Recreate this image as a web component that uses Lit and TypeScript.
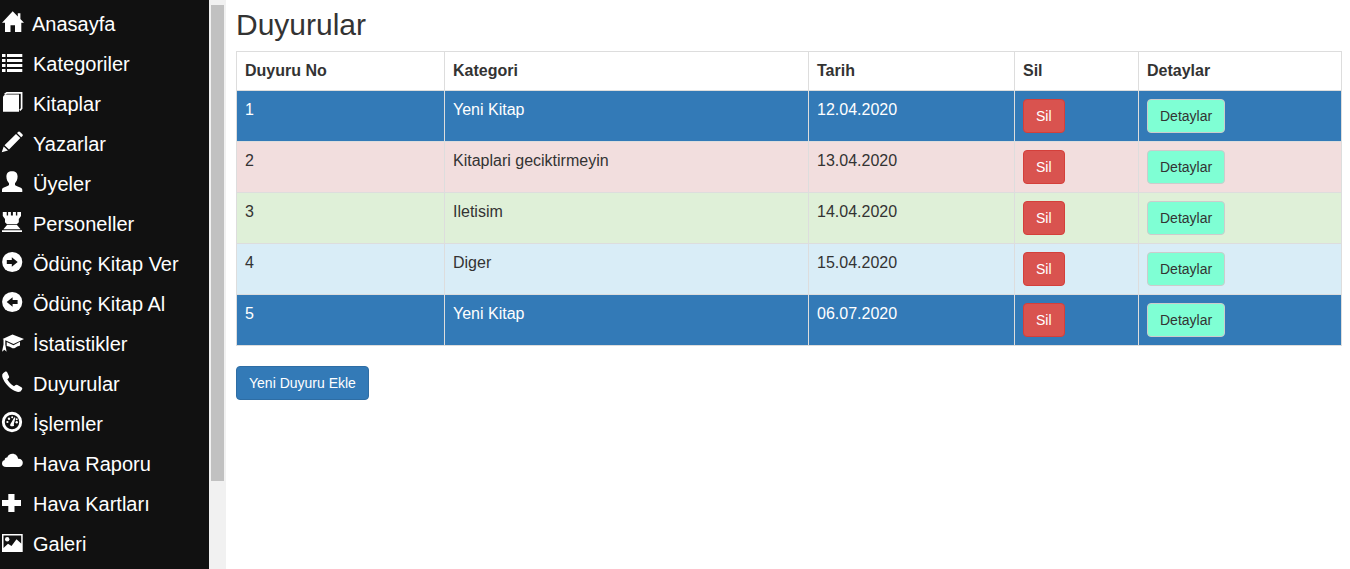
import { LitElement, html, css, svg } from "lit";
import { customElement } from "lit/decorators.js";

const icons = {
  home: svg`<path d="M10.7.3 15.8 5.4V2.300h2.600v5.700L22 11.700H19.300V21H13V14.300H8.500V21H3V11.700H0z"/>`,
  list: svg`<path d="M0 3h3.500v3H0zM0 8h3.500v3H0zM0 13h3.500v3H0zM0 18h3.500v3H0zM5 3h15.300v3H5zM5 8h15.300v3H5zM5 13h15.300v3H5zM5 18h15.300v3H5z"/>`,
  book: svg`<path d="M1 5.500 3 3.500H17V20.800H1z"/><path d="M2.600 3.400 4.800 1.800H19.600V17.500L17.800 19.300" fill="none" stroke="#fff" stroke-width="1.700"/>`,
  pencil: svg`<path d="M-.3 21.200 1.700 15.400 6 19.500zM2.500 14.200 14 3 18.300 7.100 7 18.600zM15 2 16.400.8Q17.200.2 18 .9L20.600 3.500Q21.200 4.300 20.500 5L19.200 6.200z"/>`,
  user: svg`<path d="M10 .2C13.500.2 15.600 2 15.600 5.600 15.600 9 14.200 11 13 12.300V14C14 15.600 20.300 16 20.300 18.800V21H0V18.800C0 16 6 15.600 7 14V12.300C5.800 11 4.400 9 4.400 5.600 4.400 2 6.500.2 10 .2z"/>`,
  tower: svg`<path d="M.8 1H4.700V4.600H6.100V1H8.900V4.600H10.900V1H13.900V4.600H15.300V1H19V5L16.800 8V11.300L14.800 13.200H5L3 11.300V8L.8 5zM5 14.100H15L18.600 18.300H1.400zM0 19.300H20V21H0z"/>`,
  right: svg`<circle cx="10.200" cy="11" r="10.100"/><path d="M4.800 8.900H9.800V6.300L15.700 11 9.800 15.700V13.100H4.800z" fill="#111"/>`,
  left: svg`<circle cx="10.200" cy="11" r="10.100"/><path d="M15.600 8.900H10.600V6.300L4.700 11 10.600 15.700V13.100H15.600z" fill="#111"/>`,
  cap: svg`<path d="M.6 7.900 10.500 3.500 22 8 11.500 12.900zM4.700 11 11.500 14.200 18 10.800V14.500L17 15C14 15.500 13.800 17.300 11.500 17.300 9 17.300 8.500 15.200 4.700 15zM1.500 8.300H3.300V13.500L4.600 20.800 2.400 18.800 0 20.800 1.500 13.500z"/>`,
  phone: svg`<path d="M1.400 1.900 3.400.6Q4.700.2 5.300 1.400L7.100 5.400Q7.400 6.600 6.500 7.200L5.300 8.300C6.500 10.700 8.900 13.300 12 15.300L13.600 14.100Q14.600 13.500 15.500 14L19.800 16.500Q20.700 17.300 20 18.500L18.500 20.400C16.400 21.500 13.600 20.600 11 19.100 5.800 15.700 1.300 10.500.2 5.300Q-.1 2.900 1.400 1.900z"/>`,
  gauge: svg`<circle cx="10" cy="11" r="8.700" fill="none" stroke="#fff" stroke-width="2.900"/><path d="M8.300 13.200 12.400 6.300 13.400 6.800 11.800 13.200Q12.800 15 11 15.300H9Q7.600 14.800 8.300 13.200z"/><circle cx="5.400" cy="11" r="1.100"/><circle cx="7" cy="7.700" r="1.200"/><circle cx="10.200" cy="6.300" r="1"/><circle cx="14.700" cy="8.300" r="1"/><circle cx="14.700" cy="11.200" r="1.200"/>`,
  cloud: svg`<path d="M4.200 16C1.500 16 0 14.500 0 12.500 0 10.500 1.200 9.300 2.700 9 2.500 7.200 3.800 6.200 5.200 6.500 6.200 4 8 2.800 10.400 2.800 13.600 2.800 15.800 5 16.100 7.700 19 7.400 20.800 9.300 20.800 11.800 20.800 14.300 19 16 16.800 16z"/>`,
  plus: svg`<path d="M6.300 3H12.500V9H19V15H12.500V21H6.300V15H0V9H6.300z"/>`,
  image: svg`<path fill-rule="evenodd" d="M0 3H20.700V21H0zM1.500 4.500V17L6 12.700 9.500 15 14.500 8.300 19.200 12.500V4.500z"/><circle cx="5.200" cy="8.300" r="2.200"/>`,
};

const menu: [keyof typeof icons, string][] = [
  ["home", "Anasayfa"],
  ["list", "Kategoriler"],
  ["book", "Kitaplar"],
  ["pencil", "Yazarlar"],
  ["user", "Üyeler"],
  ["tower", "Personeller"],
  ["right", "Ödünç Kitap Ver"],
  ["left", "Ödünç Kitap Al"],
  ["cap", "İstatistikler"],
  ["phone", "Duyurular"],
  ["gauge", "İşlemler"],
  ["cloud", "Hava Raporu"],
  ["plus", "Hava Kartları"],
  ["image", "Galeri"],
];

const rows = [
  ["1", "Yeni Kitap", "12.04.2020", "primary"],
  ["2", "Kitaplari geciktirmeyin", "13.04.2020", "danger"],
  ["3", "Iletisim", "14.04.2020", "success"],
  ["4", "Diger", "15.04.2020", "info"],
  ["5", "Yeni Kitap", "06.07.2020", "primary"],
];

@customElement("app-root")
export class AppRoot extends LitElement {
  static styles = css`
    :host {
      display: flex;
      height: 569px;
      overflow: hidden;
      background: #fff;
      color: #333;
      font-family: "Liberation Sans", Arial, sans-serif;
      font-size: 16px;
      line-height: 1.42857;
    }
    * { box-sizing: border-box; }
    .sidebar {
      width: 209px;
      flex: none;
      padding-top: 4px;
      background: #111;
    }
    .item {
      display: flex;
      align-items: center;
      height: 40px;
      padding-left: 2px;
      gap: 8px;
      color: #fff;
      font-size: 20px;
      line-height: 40px;
      text-decoration: none;
      white-space: nowrap;
    }
    .item + .item { gap: 9px; }
    .icon {
      width: 22px;
      height: 22px;
      flex: none;
      overflow: visible;
      fill: #fff;
      margin-top: -4px;
    }
    .track {
      width: 17px;
      flex: none;
      padding: 5px 2px 0;
      background: #f1f1f1;
    }
    .thumb { height: 476px; background: #c1c1c1; }
    main { padding-left: 10px; }
    h2 {
      margin: 8px 0 10px;
      font-size: 30px;
      font-weight: 400;
      line-height: 33px;
    }
    table {
      width: 1105px;
      table-layout: fixed;
      border-collapse: collapse;
      margin-bottom: 20px;
    }
    th, td {
      padding: 8px;
      border: 1px solid #ddd;
      text-align: left;
      vertical-align: top;
    }
    th { height: 39px; padding-bottom: 7px; }
    td { height: 51px; }
    .primary { background: #337ab7; color: #fff; }
    .danger { background: #f2dede; }
    .success { background: #dff0d8; }
    .info { background: #d9edf7; }
    .btn {
      display: block;
      height: 34px;
      padding: 6px 12px;
      border: 1px solid #2e6da4;
      border-radius: 4px;
      background: #337ab7;
      color: #fff;
      font: 14px/20px "Liberation Sans", Arial, sans-serif;
    }
    .delete { background: #d9534f; border-color: #d43f3a; }
    .details { background: #7fffd4; border-color: #ccc; color: #333; }
  `;

  render() {
    return html`
      <nav class="sidebar">
        ${menu.map(
          ([icon, label]) => html`<a class="item"><svg class="icon" viewBox="0 0 22 22">${icons[icon]}</svg><span>${label}</span></a>`
        )}
      </nav>
      <div class="track"><div class="thumb"></div></div>
      <main>
        <h2>Duyurular</h2>
        <table>
          <colgroup>
            ${[208, 364, 206, 124, 203].map((w) => html`<col style="width:${w}px" />`)}
          </colgroup>
          <tbody>
            <tr>
              <th>Duyuru No</th><th>Kategori</th><th>Tarih</th><th>Sil</th><th>Detaylar</th>
            </tr>
            ${rows.map(
              ([no, kind, date, tone]) => html`<tr class=${tone}>
                <td>${no}</td><td>${kind}</td><td>${date}</td>
                <td><button class="btn delete">Sil</button></td>
                <td><button class="btn details">Detaylar</button></td>
              </tr>`
            )}
          </tbody>
        </table>
        <button class="btn">Yeni Duyuru Ekle</button>
      </main>
    `;
  }
}
